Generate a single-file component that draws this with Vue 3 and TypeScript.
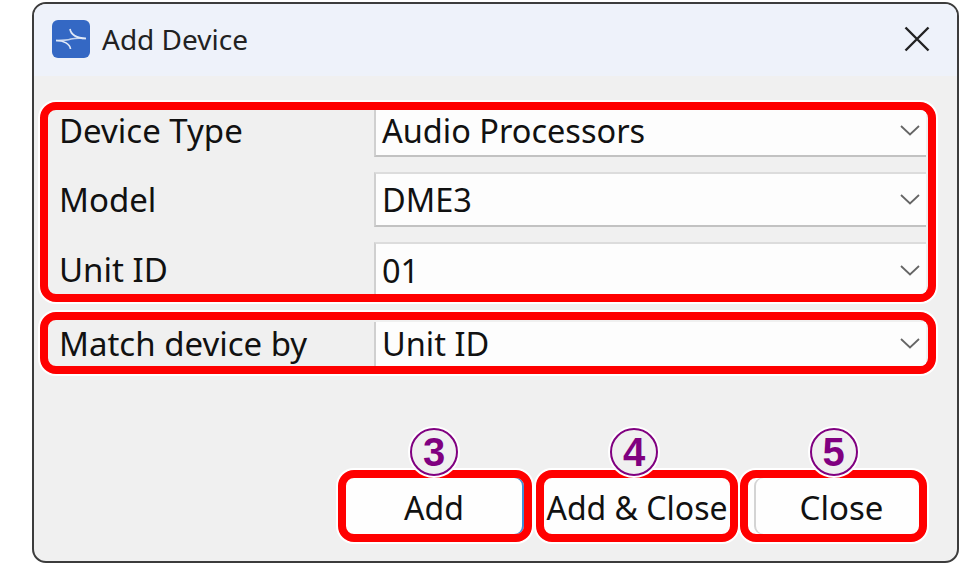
<script setup lang="ts">
interface Row { label: string; value: string; kind: string }
const rows: Row[] = [
  { label: 'Device Type', value: 'Audio Processors', kind: 'first' },
  { label: 'Model', value: 'DME3', kind: 'middle' },
  { label: 'Unit ID', value: '01', kind: 'last' },
]
const matchRow: Row = { label: 'Match device by', value: 'Unit ID', kind: 'match' }
const buttons = [
  { label: 'Add', num: '3', kind: 'add' },
  { label: 'Add & Close', num: '4', kind: 'addclose' },
  { label: 'Close', num: '5', kind: 'close' },
]
</script>

<template>
  <div class="window">
    <header class="titlebar">
      <svg class="app-icon" viewBox="0 0 38 38" aria-hidden="true">
        <rect width="38" height="38" rx="6" fill="#3468c4" />
        <path d="M4 20.5 C12 20.5 16 20 19 19 C23 18 28 18 34 18.5" fill="none" stroke="#c3d3ee" stroke-width="1.4" />
        <path d="M18 9 C19 15 24 18 34 18.5 M18.5 29 C18 24 12 20.5 4 20.5" fill="none" stroke="#dfe8f7" stroke-width="1.7" />
      </svg>
      <span class="title">Add Device</span>
      <svg class="close-x" viewBox="0 0 26 26" aria-hidden="true">
        <path d="M1.5 1.5 L24.5 24.5 M24.5 1.5 L1.5 24.5" stroke="#222" stroke-width="2.4" fill="none" />
      </svg>
    </header>

    <section class="group main">
      <div v-for="r in rows" :key="r.label" class="row" :class="r.kind">
        <span class="label">{{ r.label }}</span>
        <div class="select">
          <span>{{ r.value }}</span>
          <svg class="chev" viewBox="0 0 20 11" aria-hidden="true"><path d="M1 1 L10 9.5 L19 1" fill="none" stroke="#666" stroke-width="1.8" /></svg>
        </div>
      </div>
    </section>

    <section class="group second">
      <div class="row" :class="matchRow.kind">
        <span class="label">{{ matchRow.label }}</span>
        <div class="select">
          <span>{{ matchRow.value }}</span>
          <svg class="chev" viewBox="0 0 20 11" aria-hidden="true"><path d="M1 1 L10 9.5 L19 1" fill="none" stroke="#666" stroke-width="1.8" /></svg>
        </div>
      </div>
    </section>

    <footer class="actions">
      <div v-for="b in buttons" :key="b.kind" class="btn" :class="b.kind">
        <span class="btn-text">{{ b.label }}</span>
        <span class="badge">{{ b.num }}</span>
      </div>
    </footer>
  </div>
</template>

<style>
html, body { margin: 0; background: #fff; }
</style>

<style scoped>
.window {
  box-sizing: border-box;
  width: 927px;
  height: 561px;
  margin: 2px 0 0 32px;
  border: 2px solid #3c3c3c;
  border-radius: 14px;
  background: #f0f0f0;
  overflow: hidden;
  font-family: "Noto Sans", sans-serif;
  color: #111;
  position: relative;
}
.titlebar {
  box-sizing: border-box;
  height: 72px;
  background: #eef2fa;
  display: flex;
  align-items: center;
  padding: 0 27px 2px 18px;
}
.app-icon { width: 38px; height: 38px; flex: none; }
.title {
  margin-left: 12px;
  font-size: 28px;
  color: #222;
  flex: 1;
}
.close-x { width: 26px; height: 26px; flex: none; }

.group {
  box-sizing: border-box;
  width: 896px;
  margin-left: 6px;
  border: 8px solid #f00;
  border-radius: 16px;
  box-shadow: 0 0 0 2px #fff;
  overflow: hidden;
}
.main {
  margin-top: 26px;
  height: 200px;
  display: flex;
  flex-direction: column;
  gap: 15px;
}
.second { margin-top: 10px; height: 62px; }

.row {
  display: flex;
  align-items: stretch;
  padding: 0 2px 0 11px;
}
.row.first { height: 47px; }
.row.middle { height: 55px; }
.row.last { height: 52px; }
.row.match { height: 46px; }
.label {
  width: 315px;
  flex: none;
  font-size: 33px;
  display: flex;
  align-items: center;
}
.first .label { padding-bottom: 6px; }
.last .label { padding-top: 2px; }
.select {
  flex: 1;
  box-sizing: border-box;
  display: flex;
  align-items: center;
  justify-content: space-between;
  padding: 0 6px 0 6px;
  background: #fdfdfd;
  border-left: 2px solid #d0d0d0;
  border-top: 2px solid #dcdcdc;
  border-bottom: 2px solid #c2c2c2;
  font-size: 32.5px;
}
.first .select { border-top: 0; padding-bottom: 4px; }
.last .select { border-bottom: 0; padding-top: 2px; }
.match .select { border-bottom: 0; border-top: 0; margin-top: 2px; padding-bottom: 2px; }
.chev { width: 20px; height: 11px; flex: none; }

.actions {
  display: flex;
  justify-content: flex-end;
  margin-top: 96px;
  padding-right: 30px;
}
.btn {
  box-sizing: border-box;
  height: 72px;
  border: 8px solid #f00;
  border-radius: 16px;
  background: #fefefe;
  box-shadow: 0 0 0 2px #fff;
  display: flex;
  align-items: center;
  justify-content: center;
  position: relative;
}
.btn.add { width: 194px; padding-right: 2px; box-shadow: 0 0 0 2px #fff, inset -2px 0 0 #3f8fd6; }
.btn.addclose { width: 202px; margin-left: 4px; }
.btn.close { width: 187px; margin-left: 2px; padding-left: 16px; box-shadow: 0 0 0 2px #fff, inset 6px 0 0 #fefefe, inset 8px 0 0 #d4d4d4; }
.btn-text { font-size: 33px; white-space: nowrap; padding-top: 2px; }
.addclose .btn-text { font-size: 32px; }
.add .btn-text { font-size: 32px; }
.badge {
  position: absolute;
  top: -50px;
  left: 50%;
  margin-left: -24px;
  box-sizing: border-box;
  width: 48px;
  height: 48px;
  border: 2px solid #800080;
  border-radius: 50%;
  background: #f0f0f0;
  box-shadow: 0 0 0 2px #fff;
  color: #800080;
  font: 700 40px/44px "Liberation Sans", sans-serif;
  text-align: center;
}
.add .badge { margin-left: -25px; }
.addclose .badge { margin-left: -27px; }
.close .badge { margin-left: -24px; }
</style>
